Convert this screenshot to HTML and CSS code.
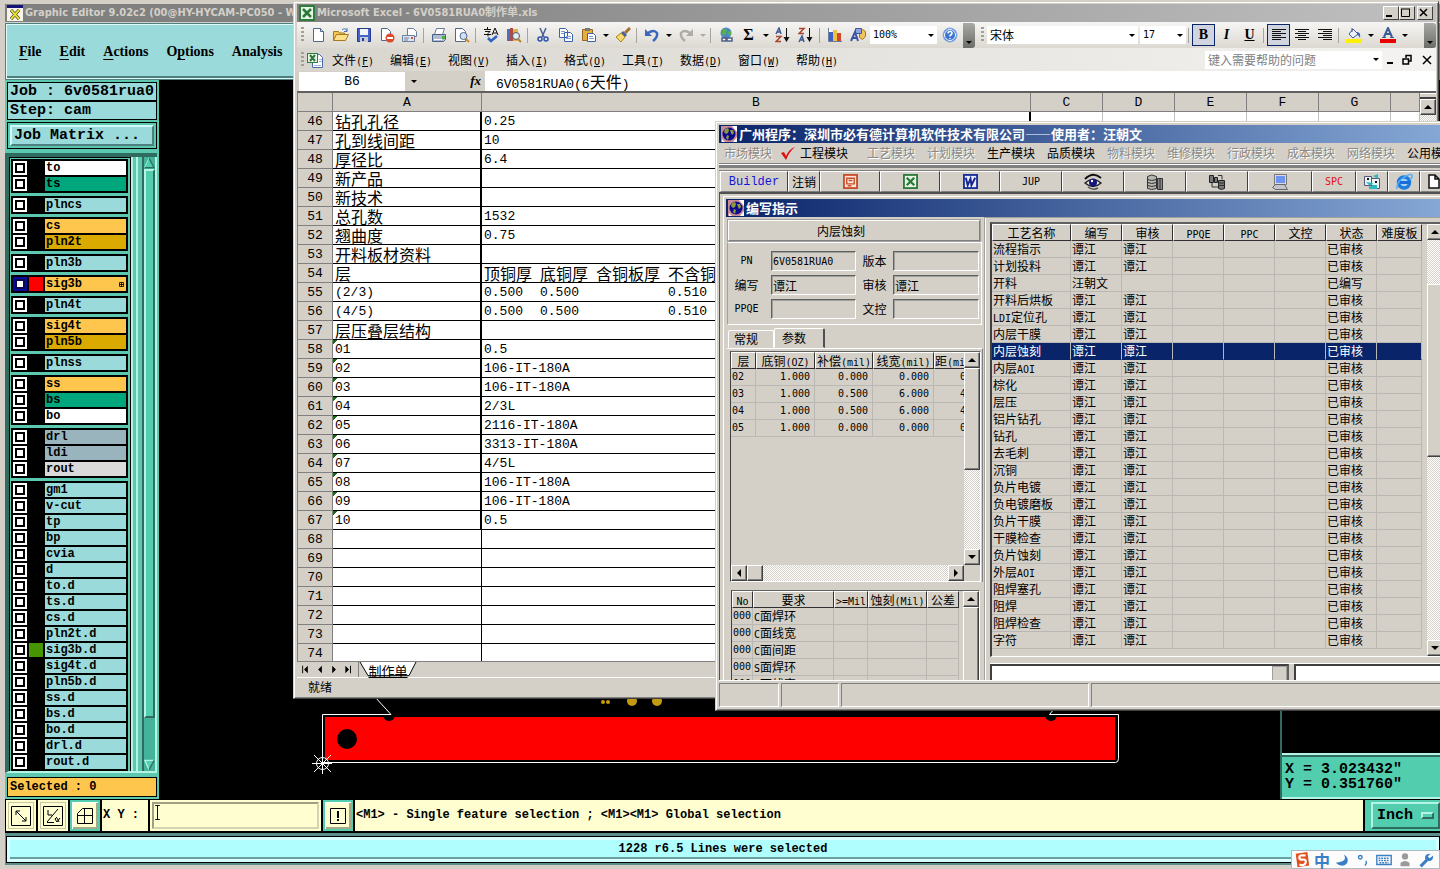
FILE: index.html
```html
<!DOCTYPE html>
<html lang="zh-CN">
<head>
<meta charset="utf-8">
<title>Graphic Editor</title>
<link rel="stylesheet" href="styles.css">
</head>
<body>
<svg class="defs" aria-hidden="true">
  <defs>
    <symbol id="globe" viewBox="0 0 16 16"><path fill="#c98a94" d="M0 0h16v16H0z"/><path fill="#fff" d="M11 0h5v6zM12 16h4v-5zM1 13l3 3H1z"/><circle cx="8" cy="8" r="6.500" fill="#0a0a8c"/><path fill="#8c9a3c" d="M4 3l3-1 1 2-1 3-2 1-2-2zM9 4l3 0 1 3-2 2-1-2zM6 9l2 1-1 4-2-2z"/></symbol>
    <symbol id="xl" viewBox="0 0 16 16"><path fill="#2f7d3c" d="M0 0h16v16H0z"/><path fill="#e8f4e8" d="M2 2h12v12H2z"/><path stroke="#2b7a38" stroke-width="2.500" d="M4 4l8 8M12 4l-8 8"/></symbol>
    <symbol id="xldoc" viewBox="0 0 16 16"><path fill="#fff" stroke="#4c6ca8" d="M5.500 2.500h7l3 3v10h-10z"/><path stroke="#9cb4dc" d="M12 7.500h3M12 9.500h3M7 13.500h7"/><path fill="#2f7d3c" d="M0 1h11v10H0z"/><path fill="#e8f4e8" d="M1 2h9v8H1z"/><path stroke="#2b7a38" stroke-width="2" d="M3 3l5 6M8 3L3 9"/></symbol>
    <symbol id="word" viewBox="0 0 16 16"><path fill="#1d2f9a" d="M0 0h16v16H0z"/><path fill="#e8ecff" d="M2 2h12v12H2z"/><path fill="none" stroke="#14228a" stroke-width="2" d="M3 4l2 8 3-7 1 7 4-8"/></symbol>
    <symbol id="ppt" viewBox="0 0 16 16"><path fill="#c8502c" d="M0 0h16v16H0z"/><path fill="#fbe6dc" d="M2 2h12v12H2z"/><path fill="none" stroke="#c8502c" stroke-width="1.500" d="M4 4.500h8v6H4zM6 7h4M5 12.500h4"/></symbol>
    <symbol id="new" viewBox="0 0 16 16"><path fill="#fff" stroke="#52678c" d="M3.500 1.500h7l3 3v10h-10z"/><path fill="#c6d4ea" stroke="#52678c" d="M10.500 1.500v3h3"/></symbol>
    <symbol id="open" viewBox="0 0 16 16"><path fill="#f3c653" stroke="#a87a20" d="M.5 13.500v-9h5l1 1.500h5v2"/><path fill="#ffe08a" stroke="#a87a20" d="M.5 13.500l3-6h12l-3 6z"/><path fill="none" stroke="#4a72b8" d="M9 3q3-3 5 1m0-3v3.500h-3"/></symbol>
    <symbol id="save" viewBox="0 0 16 16"><path fill="#4464c8" stroke="#26388c" d="M1.500 1.500h13v13h-13z"/><path fill="#f2f4fa" d="M4 2h8v6H4z"/><path fill="#c9ccd6" d="M4 10h8v5H4z"/><path fill="#26388c" d="M6 11h2v3H6z"/></symbol>
    <symbol id="perm" viewBox="0 0 16 16"><path fill="#fff" stroke="#52678c" d="M2.500 1.500h6l3 3v9h-9z"/><circle cx="11" cy="11" r="4.500" fill="#dc4a2c"/><path fill="#fff" d="M8 10h6v2H8z"/></symbol>
    <symbol id="mail" viewBox="0 0 16 16"><path fill="#fff" stroke="#6c7c9c" d="M5.500 1.500h6l3 3v5h-9z"/><path fill="#dfe6f2" stroke="#6c7c9c" d="M.5 8.500h12v6H.5z"/><path stroke="#6c7c9c" d="M2 11h5m-5 2h4"/><path fill="#d4552c" d="M9 10h2v2H9z"/></symbol>
    <symbol id="print" viewBox="0 0 16 16"><path fill="#fff" stroke="#6c7c9c" d="M5.500 1.500h8l-2 6h-8z"/><path fill="#aebbd2" stroke="#4c5f86" d="M1.500 7.500h13v5l-2 2h-11z"/><path fill="#fff" d="M3 12h8v1H3z"/><path fill="#4cae3c" d="M11 9h3v3h-3z"/></symbol>
    <symbol id="preview" viewBox="0 0 16 16"><path fill="#fff" stroke="#52678c" d="M1.500 1.500h7l3 3v10h-10z"/><circle cx="9.500" cy="9" r="3.500" fill="#cfe2f4" stroke="#52678c"/><path stroke="#d08a20" stroke-width="2" d="M12 12l3 3"/></symbol>
    <symbol id="spell" viewBox="0 0 16 16"><path fill="none" stroke="#111" d="M1 2.500h7M4.500 0v2M2 4.500h5l-2 2v3M1 7.500h7M9 8l3-7 3 7M10 6h4"/><path fill="none" stroke="#2e62c4" stroke-width="2.500" d="M5 11l3 3 6-5"/></symbol>
    <symbol id="research" viewBox="0 0 16 16"><path fill="#4a72b8" d="M1 2h3v12H1z"/><path fill="#b04a4a" d="M4 1h3v13H4z"/><path fill="#dcb44c" d="M7 2h5v12H7z"/><circle cx="10" cy="9" r="3.500" fill="#e3edf7" stroke="#555"/><path stroke="#b88324" stroke-width="2" d="M12 12l3 3"/></symbol>
    <symbol id="cut" viewBox="0 0 16 16"><path fill="none" stroke="#48608c" stroke-width="1.500" d="M5 1l4 9M11 1l-4 9"/><g fill="none" stroke="#2c54b0" stroke-width="1.500"><circle cx="5" cy="12" r="2"/><circle cx="11" cy="12" r="2"/></g></symbol>
    <symbol id="copy" viewBox="0 0 16 16"><path fill="#fff" stroke="#3c62ac" d="M1.500 1.500h6l2 2v7h-8zM6.500 5.500h6l2 2v7h-8z"/><path stroke="#7c9cd4" d="M3 4.500h4M3 6.500h3M8 9.500h5M8 11.500h5"/></symbol>
    <symbol id="paste" viewBox="0 0 16 16"><path fill="#e6ac3c" stroke="#94682c" d="M1.500 2.500h10v11h-10z"/><path fill="#777" d="M4 1h5v3H4z"/><path fill="#fff" stroke="#3c62ac" d="M6.500 6.500h6l2 2v6h-8z"/><path stroke="#7c9cd4" d="M8 9.500h4M8 11.500h5"/></symbol>
    <symbol id="brush" viewBox="0 0 16 16"><path stroke="#a4702c" stroke-width="3" d="M15 1l-5 5"/><path fill="#4a62a4" d="M8 4l4 4-2 2-4-4z"/><path fill="#f4d870" stroke="#a88420" d="M6 6l4 4-4 5-5-5z"/></symbol>
    <symbol id="undo" viewBox="0 0 16 16"><path fill="none" stroke="currentColor" stroke-width="2.500" d="M4 6q6-4 9 0 1 4-4 8"/><path fill="currentColor" d="M1 2v7h7z"/></symbol>
    <symbol id="link" viewBox="0 0 16 16"><circle cx="8" cy="6" r="5.500" fill="#4a86c8"/><path fill="#56b050" d="M4 3l4-2 1 4-3 4-2-2zM10 5l3-1v4l-2 1z"/><path fill="#fff" stroke="#4c5f86" stroke-width="1.500" d="M4 11h4v3H4zM9 11h5v3H9z"/></symbol>
    <symbol id="chart" viewBox="0 0 16 16"><path fill="#fff" stroke="#6c7c9c" d="M1.500 1v13.500H15"/><path fill="#3c62c4" d="M2 5h4v9H2z"/><path fill="#f0c040" d="M6 3h4v11H6z"/><path fill="#d0482c" d="M10 6h4v8h-4z"/></symbol>
    <symbol id="draw" viewBox="0 0 16 16"><path fill="#f0c458" stroke="#a0782c" d="M9.500 5.500l3-3 3 2v5l-3 3-3-2z"/><path fill="#8ea4e0" stroke="#4458a4" d="M5.500 1.500h6v5h-6z"/><path fill="none" stroke="#3c54a8" stroke-width="2" d="M1 14l4-9 3 9M3 11h4"/></symbol>
    <symbol id="help" viewBox="0 0 16 16"><circle cx="8" cy="8" r="7" fill="#3a74d0" stroke="#8cb0e8"/><circle cx="8" cy="8" r="5.500" fill="none" stroke="#fff"/><path fill="none" stroke="#fff" stroke-width="1.500" d="M6 6.500q0-2 2-2t2 2q0 1-2 2v1M8 11v1"/></symbol>
    <symbol id="bucket" viewBox="0 0 16 16"><path fill="#eef2fa" stroke="#3c5a94" d="M7 2l5 5-5 4-4-4zM6 5V1"/><path fill="#3c62ac" d="M11 5q4 0 3 6-1-3-3-3z"/><path fill="#fdf000" d="M0 12h16v4H0z"/></symbol>
    <symbol id="fontcolor" viewBox="0 0 16 16"><path fill="none" stroke="#3c5a94" stroke-width="2" d="M4 10l4-9 4 9M5 7h6"/><path stroke="#3c5a94" d="M2 10.500h4M10 10.500h4"/><path fill="#e80000" d="M0 12h16v4H0z"/></symbol>
    <symbol id="sort-az" viewBox="0 0 16 16"><path fill="none" stroke="#3c5a94" stroke-width="1.500" d="M1 7l3-6 2 6M2 5h4"/><path fill="none" stroke="#a8442c" stroke-width="1.500" d="M1 9.500h5l-5 5h5"/><path fill="#111" d="M11 1h1v11h-1zM8.500 10h6L11.500 15z"/></symbol>
    <symbol id="sort-za" viewBox="0 0 16 16"><path fill="none" stroke="#a8442c" stroke-width="1.500" d="M1 1.500h5l-5 5h5"/><path fill="none" stroke="#3c5a94" stroke-width="1.500" d="M1 15l3-6 2 6M2 13h4"/><path fill="#111" d="M11 1h1v11h-1zM8.500 10h6L11.500 15z"/></symbol>
    <symbol id="al-left" viewBox="0 0 16 16"><path stroke="#111" d="M1 2.500h14M1 4.500h9M1 6.500h14M1 8.500h9M1 10.500h14M1 12.500h9"/></symbol>
    <symbol id="al-center" viewBox="0 0 16 16"><path stroke="#111" d="M1 2.500h14M4 4.500h8M1 6.500h14M4 8.500h8M1 10.500h14M4 12.500h8"/></symbol>
    <symbol id="al-right" viewBox="0 0 16 16"><path stroke="#111" d="M1 2.500h14M6 4.500h9M1 6.500h14M6 8.500h9M1 10.500h14M6 12.500h9"/></symbol>
    <symbol id="eye" viewBox="0 0 18 18"><path fill="none" stroke="#111" stroke-width="2" d="M1 6q8-8 16-1"/><path fill="#eee" stroke="#222" stroke-width="1.500" d="M1 10q8-7 16 0-8 7-16 0z"/><circle cx="9" cy="9.500" r="4" fill="#14147c"/><circle cx="8" cy="8" r="1.200" fill="#fff"/><path fill="none" stroke="#555" stroke-width="1.500" d="M4 14q5 4 10 1"/></symbol>
    <symbol id="db" viewBox="0 0 18 18"><path fill="#b8b6b0" stroke="#333" d="M1.500 3.500q4-3 9 0v12q-5 2-9 0z"/><path fill="none" stroke="#333" d="M1.500 6.500q4 2 9 0M1.500 9.500q4 2 9 0M1.500 12.500q4 2 9 0"/><path fill="#888" stroke="#333" d="M11.500 5.500h5v11h-5zM14 6v10"/></symbol>
    <symbol id="net" viewBox="0 0 18 18"><path fill="#777" stroke="#222" d="M1.500 2.500h4v7h-4zM6.500 4.500h3v5h-3zM10.500 7.500h6v8l-3 1-3-1z"/><path fill="none" stroke="#333" d="M10 2.500h4v4M4 10v4h6M11 10h5M11 12.500h5"/></symbol>
    <symbol id="pc" viewBox="0 0 18 18"><path fill="#d8d8e4" stroke="#777" d="M3.500 1.500h12v10h-12z"/><path fill="#6c94f0" d="M5 3h9v7H5z"/><path fill="#c4c4cc" stroke="#666" d="M1.500 14.500l3-3h9l3 5h-12z"/></symbol>
    <symbol id="sync" viewBox="0 0 18 18"><path fill="#e8f4f4" stroke="#557" d="M1.500 3.500h7v9h-7zM8.500 5.500h8v10h-8z"/><path fill="#2cb8c0" d="M3 9l5 5 2-4zM10 3l5-2v5zM6 12h8v4H6z"/><path fill="#111" d="M4 5h2v2H4zM12 8h2v2h-2z"/></symbol>
    <symbol id="ie" viewBox="0 0 18 18"><circle cx="9" cy="9.500" r="5.500" fill="#a8d0f8" stroke="#1c7ce0" stroke-width="3.500"/><path fill="#1c6cd8" d="M5 8h10v3H5z"/><path fill="none" stroke="#58aef4" stroke-width="1.500" d="M2 16Q1 10 8 5t9-3q1 2-2 5"/></symbol>
    <symbol id="sheet" viewBox="0 0 18 18"><path fill="#fff" stroke="#111" stroke-width="1.500" d="M4 2h6l4 4v9H4zM10 2v4h4"/></symbol>
  </defs>
</svg>

<main class="editor">
  <header class="titlebar titlebar-off">
    <svg class="i16" viewBox="0 0 16 16"><path fill="#f6f4e8" d="M0 0h16v16H0z"/><path fill="#141478" d="M0 0h16v3H0z"/><path stroke="#111" stroke-width="3" d="M4 5l8 9M12 5l-8 9"/><path stroke="#e8e030" stroke-width="2" d="M4 5l8 9M12 5l-8 9"/></svg>
    <h1>Graphic Editor 9.02c2 (00@HY-HYCAM-PC050 - W</h1>
  </header>
  <nav class="ed-menu">
    <button><u>F</u>ile</button><button><u>E</u>dit</button><button><u>A</u>ctions</button><button>O<u>p</u>tions</button><button>Analysis</button>
  </nav>

  <div class="ed-main">
    <aside class="side">
      <p class="job">Job : 6v0581rua0</p>
      <p class="job step">Step: cam</p>
      <div class="matrix"><button>Job Matrix ...</button></div>
      <div class="list">
        <div class="layers">
          <div class="grp">
            <label class="ly white"><input type="checkbox"><i></i><span>to</span></label>
            <label class="ly green"><input type="checkbox"><i></i><span>ts</span></label>
          </div>
          <div class="grp"><label class="ly"><input type="checkbox"><i></i><span>plncs</span></label></div>
          <div class="grp">
            <label class="ly amber"><input type="checkbox"><i></i><span>cs</span></label>
            <label class="ly gold"><input type="checkbox"><i></i><span>pln2t</span></label>
          </div>
          <div class="grp"><label class="ly"><input type="checkbox"><i></i><span>pln3b</span></label></div>
          <div class="grp"><label class="ly amber"><input type="checkbox" checked><i class="red"></i><span>sig3b<svg viewBox="0 0 5 5"><path d="M.5.5h4v4h-4zM2.500 0v5M0 2.500h5" fill="none" stroke="#000" stroke-width=".8"/></svg></span></label></div>
          <div class="grp"><label class="ly"><input type="checkbox"><i></i><span>pln4t</span></label></div>
          <div class="grp">
            <label class="ly amber"><input type="checkbox"><i></i><span>sig4t</span></label>
            <label class="ly gold"><input type="checkbox"><i></i><span>pln5b</span></label>
          </div>
          <div class="grp"><label class="ly"><input type="checkbox"><i></i><span>plnss</span></label></div>
          <div class="grp">
            <label class="ly amber"><input type="checkbox"><i></i><span>ss</span></label>
            <label class="ly green"><input type="checkbox"><i></i><span>bs</span></label>
            <label class="ly white"><input type="checkbox"><i></i><span>bo</span></label>
          </div>
          <div class="grp">
            <label class="ly slate"><input type="checkbox"><i></i><span>drl</span></label>
            <label class="ly slate"><input type="checkbox"><i></i><span>ldi</span></label>
            <label class="ly silver"><input type="checkbox"><i></i><span>rout</span></label>
          </div>
          <div class="grp">
            <label class="ly"><input type="checkbox"><i></i><span>gm1</span></label>
            <label class="ly"><input type="checkbox"><i></i><span>v-cut</span></label>
            <label class="ly"><input type="checkbox"><i></i><span>tp</span></label>
            <label class="ly"><input type="checkbox"><i></i><span>bp</span></label>
            <label class="ly"><input type="checkbox"><i></i><span>cvia</span></label>
            <label class="ly"><input type="checkbox"><i></i><span>d</span></label>
            <label class="ly"><input type="checkbox"><i></i><span>to.d</span></label>
            <label class="ly"><input type="checkbox"><i></i><span>ts.d</span></label>
            <label class="ly"><input type="checkbox"><i></i><span>cs.d</span></label>
            <label class="ly"><input type="checkbox"><i></i><span>pln2t.d</span></label>
            <label class="ly"><input type="checkbox"><i class="lime"></i><span>sig3b.d</span></label>
            <label class="ly"><input type="checkbox"><i></i><span>sig4t.d</span></label>
            <label class="ly"><input type="checkbox"><i></i><span>pln5b.d</span></label>
            <label class="ly"><input type="checkbox"><i></i><span>ss.d</span></label>
            <label class="ly"><input type="checkbox"><i></i><span>bs.d</span></label>
            <label class="ly"><input type="checkbox"><i></i><span>bo.d</span></label>
            <label class="ly"><input type="checkbox"><i></i><span>drl.d</span></label>
            <label class="ly"><input type="checkbox"><i></i><span>rout.d</span></label>
          </div>
        </div>
        <div class="rail"></div>
        <div class="motif-scroll">
          <svg viewBox="0 0 13 13"><path fill="#52cdae" stroke="#b4f4e4" stroke-width="1.500" d="M1 12L6 1"/><path fill="#52cdae" stroke="#2f6b5f" stroke-width="1.500" d="M6 1l6 11H1"/></svg>
          <div class="thumb"></div>
          <svg viewBox="0 0 13 13"><path fill="#52cdae" stroke="#b4f4e4" stroke-width="1.500" d="M12 1H1l5 11"/><path stroke="#2f6b5f" stroke-width="1.500" d="M12 1L6 12"/></svg>
        </div>
      </div>
      <p class="selected">Selected : 0</p>
    </aside>

    <svg class="board" role="img" aria-label="board">
      <g transform="translate(-159 -80)">
        <path fill="#f00" d="M325 717h790v43H325z"/>
        <circle cx="347" cy="739" r="10"/><circle cx="389" cy="715" r="6"/><circle cx="1051" cy="715" r="6"/>
        <path fill="none" stroke="#fff" d="M375 697l16 17.500h-68.500v48h793q3 0 3-4v-44h-69l4-5"/>
        <path stroke="#fff" d="M312 763.500h20M322.500 753v21M314 755l17 17M331 755l-17 17"/><circle cx="322.500" cy="763.500" r="6" fill="none" stroke="#fff"/>
        <g fill="#c49a10"><circle cx="632" cy="701" r="5"/><circle cx="657" cy="701" r="5"/><circle cx="603" cy="702" r="2"/><circle cx="608" cy="702" r="2"/></g>
      </g>
    </svg>
    <section class="coords"><p>X = 3.023432"<br>Y = 0.351760"</p></section>
  </div>

  <div class="ed-bar">
    <button class="tb" aria-label="resize"><svg viewBox="0 0 22 22"><path d="M1.500 1.500h19v19h-19zM6 6l10 10M6 10V6h4M12 16h4v-4"/></svg></button>
    <button class="tb" aria-label="angle"><svg viewBox="0 0 22 22"><path d="M1.500 1.500h19v19h-19zM5 17L16 4M6 5v5h4M5 17.500h7M15 12l-2 2 2 3 3-4M17 17l-2-4"/></svg></button>
    <button class="tb on" aria-label="grid"><svg viewBox="0 0 22 22"><path d="M3.500 8.500l5-5h10v15h-15zM3 10.500h16M10.500 3v16"/></svg></button>
    <label class="xy" for="xy">X Y :</label>
    <div class="xy-box"><input id="xy" type="text"><svg class="ibeam" viewBox="0 0 5 16"><path fill="none" stroke="#000" d="M0 .5h5M0 15.500h5M2.500 0v16"/></svg></div>
    <button class="tb on" aria-label="alert"><svg viewBox="0 0 22 22"><path d="M3.500 3.500h15v15h-15z"/><path stroke-width="2" d="M11 6v7M11 14v2"/></svg></button>
    <p class="hint">&lt;M1&gt; - Single feature selection ; &lt;M1&gt;&lt;M1&gt; Global selection</p>
    <div class="unit"><button>Inch<i></i></button></div>
  </div>
  <footer class="ed-status"><p>1228 r6.5 Lines were selected</p></footer>
</main>

<section class="win excel">
  <header class="titlebar titlebar-off">
    <svg class="i16"><use href="#xl"/></svg><h2>Microsoft Excel - 6V0581RUA0制作单.xls</h2>
    <div class="wbtns">
      <button aria-label="min"><svg viewBox="0 0 12 10"><path fill="#000" d="M2 7h6v2H2z"/></svg></button><button aria-label="max"><svg viewBox="0 0 12 10"><path fill="none" stroke="#000" d="M1.500 1v7.500h8V1M1 1h9" /></svg></button><button class="x" aria-label="close"><svg viewBox="0 0 12 10"><path stroke="#000" stroke-width="1.500" d="M2 1l7 7M9 1L2 8"/></svg></button>
    </div>
  </header>
  <div class="tools">
    <b class="grip"></b>
    <button><svg><use href="#new"/></svg></button><button><svg><use href="#open"/></svg></button><button><svg><use href="#save"/></svg></button><button><svg><use href="#perm"/></svg></button><button><svg><use href="#mail"/></svg></button><hr>
    <button><svg><use href="#print"/></svg></button><button><svg><use href="#preview"/></svg></button><hr>
    <button><svg><use href="#spell"/></svg></button><button><svg><use href="#research"/></svg></button><hr>
    <button><svg><use href="#cut"/></svg></button><button><svg><use href="#copy"/></svg></button><button><svg><use href="#paste"/></svg></button><i class="car"></i><button><svg><use href="#brush"/></svg></button><hr>
    <button class="blue"><svg><use href="#undo"/></svg></button><i class="car"></i><button class="gray flip"><svg><use href="#undo"/></svg></button><i class="car gray"></i><hr>
    <button><svg><use href="#link"/></svg></button><button class="sigma">Σ</button><i class="car"></i><button><svg><use href="#sort-az"/></svg></button><button><svg><use href="#sort-za"/></svg></button><hr>
    <button><svg><use href="#chart"/></svg></button><button><svg><use href="#draw"/></svg></button>
    <span class="combo zoom"><select aria-label="zoom"><option>100%</option></select></span>
    <button><svg><use href="#help"/></svg></button><i class="more"></i>
    <b class="grip second"></b>
    <span class="combo font"><select aria-label="font"><option>宋体</option></select></span>
    <span class="combo size"><select aria-label="size"><option>17</option></select></span><hr>
    <button class="on serif"><b>B</b></button><button class="serif"><em>I</em></button><button class="serif"><u>U</u></button><hr>
    <button class="on"><svg><use href="#al-left"/></svg></button><button><svg><use href="#al-center"/></svg></button><button><svg><use href="#al-right"/></svg></button><hr>
    <button><svg><use href="#bucket"/></svg></button><i class="car"></i><button><svg><use href="#fontcolor"/></svg></button><i class="car"></i>
    <i class="more last"></i>
  </div>
  <nav class="x-menu">
    <b class="grip"></b><svg class="i16"><use href="#xldoc"/></svg>
    <button>文件<span class="en">(<u>F</u>)</span></button><button>编辑<span class="en">(<u>E</u>)</span></button><button>视图<span class="en">(<u>V</u>)</span></button><button>插入<span class="en">(<u>I</u>)</span></button><button>格式<span class="en">(<u>O</u>)</span></button><button>工具<span class="en">(<u>T</u>)</span></button><button>数据<span class="en">(<u>D</u>)</span></button><button>窗口<span class="en">(<u>W</u>)</span></button><button>帮助<span class="en">(<u>H</u>)</span></button>
    <span class="combo ask"><select aria-label="help"><option>键入需要帮助的问题</option></select></span>
    <svg class="mdi-btns" viewBox="0 0 50 12"><path fill="#000" d="M1 8h6v2H1z"/><path fill="none" stroke="#000" stroke-width="1.500" d="M20 4V1.500h5V7h-2M17 5h5.500v5H17zM37 2l8 8M45 2l-8 8"/></svg>
  </nav>
  <div class="fbar">
    <input class="name" aria-label="cell" value="B6"><i class="car"></i><em>fx</em>
    <p><span class="num">6V0581RUA0(6</span>天件<span class="num">)</span></p>
  </div>
  <div class="sheet">
    <div class="sheet-clip">
    <table>
      <colgroup><col class="c0"><col class="ca"><col class="cb"><col class="cn"><col class="cn"><col class="cn"><col class="cn"><col class="cn"><col></colgroup>
      <thead><tr><th></th><th>A</th><th>B</th><th>C</th><th>D</th><th>E</th><th>F</th><th>G</th><th></th></tr></thead>
      <tbody>
        <tr><th>46</th><td>钻孔孔径</td><td class="num">0.25</td><td></td><td></td><td></td><td></td><td></td><td></td></tr>
        <tr><th>47</th><td>孔到线间距</td><td class="num">10</td><td colspan="6"></td></tr>
        <tr><th>48</th><td>厚径比</td><td class="num">6.4</td><td colspan="6"></td></tr>
        <tr><th>49</th><td>新产品</td><td></td><td colspan="6"></td></tr>
        <tr><th>50</th><td>新技术</td><td></td><td colspan="6"></td></tr>
        <tr><th>51</th><td>总孔数</td><td class="num">1532</td><td colspan="6"></td></tr>
        <tr><th>52</th><td>翘曲度</td><td class="num">0.75</td><td colspan="6"></td></tr>
        <tr><th>53</th><td>开料板材资料</td><td></td><td colspan="6"></td></tr>
        <tr><th>54</th><td>层</td><td><div class="cu"><span>顶铜厚</span><span>底铜厚</span><span>含铜板厚</span><span>不含铜板厚</span></div></td><td colspan="6"></td></tr>
        <tr><th>55</th><td class="num">(2/3)</td><td class="num"><div class="cu"><span>0.500</span><span>0.500</span><span></span><span>0.510</span></div></td><td colspan="6"></td></tr>
        <tr><th>56</th><td class="num">(4/5)</td><td class="num"><div class="cu"><span>0.500</span><span>0.500</span><span></span><span>0.510</span></div></td><td colspan="6"></td></tr>
        <tr><th>57</th><td>层压叠层结构</td><td></td><td colspan="6"></td></tr>
        <tr class="flag"><th>58</th><td class="num">01</td><td class="num">0.5</td><td colspan="6"></td></tr>
        <tr class="flag"><th>59</th><td class="num">02</td><td class="num">106-IT-180A</td><td colspan="6"></td></tr>
        <tr class="flag"><th>60</th><td class="num">03</td><td class="num">106-IT-180A</td><td colspan="6"></td></tr>
        <tr class="flag"><th>61</th><td class="num">04</td><td class="num">2/3L</td><td colspan="6"></td></tr>
        <tr class="flag"><th>62</th><td class="num">05</td><td class="num">2116-IT-180A</td><td colspan="6"></td></tr>
        <tr class="flag"><th>63</th><td class="num">06</td><td class="num">3313-IT-180A</td><td colspan="6"></td></tr>
        <tr class="flag"><th>64</th><td class="num">07</td><td class="num">4/5L</td><td colspan="6"></td></tr>
        <tr class="flag"><th>65</th><td class="num">08</td><td class="num">106-IT-180A</td><td colspan="6"></td></tr>
        <tr class="flag"><th>66</th><td class="num">09</td><td class="num">106-IT-180A</td><td colspan="6"></td></tr>
        <tr class="flag"><th>67</th><td class="num">10</td><td class="num">0.5</td><td colspan="6"></td></tr>
        <tr class="thin"><th>68</th><td></td><td></td><td colspan="6"></td></tr>
        <tr class="thin"><th>69</th><td></td><td></td><td colspan="6"></td></tr>
        <tr class="thin"><th>70</th><td></td><td></td><td colspan="6"></td></tr>
        <tr class="thin"><th>71</th><td></td><td></td><td colspan="6"></td></tr>
        <tr class="thin"><th>72</th><td></td><td></td><td colspan="6"></td></tr>
        <tr class="thin"><th>73</th><td></td><td></td><td colspan="6"></td></tr>
        <tr class="thin"><th>74</th><td></td><td></td><td colspan="6"></td></tr>
      </tbody>
    </table>
    </div>
    <div class="sb v"><i class="split"></i><button class="up" aria-label="up"></button><i class="track"></i></div>
  </div>
  <div class="tabs-row">
    <svg class="navs" viewBox="0 0 62 16"><path d="M4 4h1v8H4zM10 4v8L6 8zM25 4v8l-4-4zM36 4v8l4-4zM50 4v8l4-4zM55 4h1v8h-1z"/></svg>
    <button class="stab"><svg viewBox="0 0 58 17" preserveAspectRatio="none"><path fill="#fff" d="M1 0l8 14h41l7-14z"/><path fill="none" stroke="#000" d="M1 0l8 14.500h41l7-14.500"/></svg><span>制作单</span></button>
  </div>
  <footer class="x-status">就绪</footer>
</section>

<section class="win erp">
  <header class="titlebar titlebar-on"><svg class="i16"><use href="#globe"/></svg><h2>广州程序：深圳市必有德计算机软件技术有限公司——使用者：汪朝文</h2></header>
  <nav class="e-menu">
    <button disabled>市场模块</button><button class="ck"><svg viewBox="0 0 16 14"><path fill="#e01010" d="M1 7l3-1 2 4Q9 3 15 1 9 6 6 14z"/></svg>工程模块</button><button disabled>工艺模块</button><button disabled>计划模块</button><button>生产模块</button><button>品质模块</button><button disabled>物料模块</button><button disabled>维修模块</button><button disabled>行政模块</button><button disabled>成本模块</button><button disabled>网络模块</button><button>公用模块</button>
  </nav>
  <div class="groove"></div>
  <div class="e-tools">
    <button class="builder">Builder</button><button class="w32">注销</button><button class="w60"><svg><use href="#ppt"/></svg></button><button class="w60"><svg><use href="#xl"/></svg></button><button class="w60"><svg><use href="#word"/></svg></button><button class="w62"><span class="en">JUP</span></button><button class="w62"><svg class="i18"><use href="#eye"/></svg></button><button class="w62"><svg class="i18"><use href="#db"/></svg></button><button class="w62"><svg class="i18"><use href="#net"/></svg></button><button class="w64"><svg class="i18"><use href="#pc"/></svg></button><button class="w44 spc"><span class="en">SPC</span></button><button class="w32"><svg class="i18"><use href="#sync"/></svg></button><button class="w32"><svg class="i18"><use href="#ie"/></svg></button><button class="rest"><svg class="i18"><use href="#sheet"/></svg></button>
  </div>
  <div class="mdi">
    <div class="child">
      <header class="titlebar titlebar-on"><svg class="i16"><use href="#globe"/></svg><h3>编写指示</h3></header>
      <div class="cols">
        <div class="left">
          <p class="cap">内层蚀刻</p>
          <form class="form">
            <label for="pn" class="en">PN</label><input id="pn" class="en" value="6V0581RUA0"><label for="ver">版本</label><input id="ver">
            <label for="wr">编写</label><input id="wr" value="谭江"><label for="ap">审核</label><input id="ap" value="谭江">
            <label for="qe" class="en">PPQE</label><input id="qe"><label for="dc">文控</label><input id="dc">
          </form>
          <div class="tabs"><button>常规</button><button class="cur">参数</button></div>
          <div class="page">
            <div class="grid g1">
              <div class="clip">
                <table class="t1">
                  <colgroup><col class="k25"><col class="k59"><col class="k58"><col class="k61"><col class="k59"></colgroup>
                  <thead><tr><th>层</th><th>底铜<span class="en">(OZ)</span></th><th>补偿<span class="en">(mil)</span></th><th>线宽<span class="en">(mil)</span></th><th>距<span class="en">(mil)</span></th></tr></thead>
                  <tbody>
                    <tr><td>02</td><td>1.000</td><td>0.000</td><td>0.000</td><td>0.000</td></tr>
                    <tr><td>03</td><td>1.000</td><td>0.500</td><td>6.000</td><td>4.000</td></tr>
                    <tr><td>04</td><td>1.000</td><td>0.500</td><td>6.000</td><td>4.000</td></tr>
                    <tr><td>05</td><td>1.000</td><td>0.000</td><td>0.000</td><td>0.000</td></tr>
                  </tbody>
                </table>
              </div>
              <div class="sb v"><button class="up" aria-label="up"></button><i class="bar b102"></i><i class="track"></i><button class="down" aria-label="down"></button></div>
              <div class="sb h"><button class="lf" aria-label="left"></button><i class="bar"></i><i class="track"></i><button class="rt" aria-label="right"></button></div>
            </div>
          </div>
          <div class="grid g2">
            <div class="clip">
              <table class="t2">
                <colgroup><col class="k21"><col class="k81"><col class="k34"><col class="k59"><col class="k32"></colgroup>
                <thead><tr><th><span class="en">No</span></th><th>要求</th><th><span class="en">&gt;=Mil</span></th><th>蚀刻<span class="en">(Mil)</span></th><th>公差</th></tr></thead>
                <tbody>
                  <tr><td class="en">000</td><td><span class="en">C</span>面焊环</td><td></td><td></td><td></td></tr>
                  <tr><td class="en">000</td><td><span class="en">C</span>面线宽</td><td></td><td></td><td></td></tr>
                  <tr><td class="en">000</td><td><span class="en">C</span>面间距</td><td></td><td></td><td></td></tr>
                  <tr><td class="en">000</td><td><span class="en">S</span>面焊环</td><td></td><td></td><td></td></tr>
                  <tr><td class="en">000</td><td><span class="en">S</span>面线宽</td><td></td><td></td><td></td></tr>
                </tbody>
              </table>
            </div>
            <div class="sb v"><button class="up" aria-label="up"></button><i class="bar fill"></i></div>
          </div>
        </div>
        <div class="right">
          <div class="grid g3">
            <div class="clip">
              <table class="t3">
                <colgroup><col class="k79"><col class="k51"><col class="k51"><col class="k51"><col class="k51"><col class="k51"><col class="k51"><col class="k45"></colgroup>
                <thead><tr><th>工艺名称</th><th>编写</th><th>审核</th><th><span class="en">PPQE</span></th><th><span class="en">PPC</span></th><th>文控</th><th>状态</th><th>难度板</th></tr></thead>
                <tbody>
                  <tr><td>流程指示</td><td>谭江</td><td>谭江</td><td></td><td></td><td></td><td>已审核</td><td></td></tr>
                  <tr><td>计划投料</td><td>谭江</td><td>谭江</td><td></td><td></td><td></td><td>已审核</td><td></td></tr>
                  <tr><td>开料</td><td>汪朝文</td><td></td><td></td><td></td><td></td><td>已编写</td><td></td></tr>
                  <tr><td>开料后烘板</td><td>谭江</td><td>谭江</td><td></td><td></td><td></td><td>已审核</td><td></td></tr>
                  <tr><td><span class="en">LDI</span>定位孔</td><td>谭江</td><td>谭江</td><td></td><td></td><td></td><td>已审核</td><td></td></tr>
                  <tr><td>内层干膜</td><td>谭江</td><td>谭江</td><td></td><td></td><td></td><td>已审核</td><td></td></tr>
                  <tr class="sel"><td>内层蚀刻</td><td>谭江</td><td>谭江</td><td></td><td></td><td></td><td>已审核</td><td></td></tr>
                  <tr><td>内层<span class="en">AOI</span></td><td>谭江</td><td>谭江</td><td></td><td></td><td></td><td>已审核</td><td></td></tr>
                  <tr><td>棕化</td><td>谭江</td><td>谭江</td><td></td><td></td><td></td><td>已审核</td><td></td></tr>
                  <tr><td>层压</td><td>谭江</td><td>谭江</td><td></td><td></td><td></td><td>已审核</td><td></td></tr>
                  <tr><td>铝片钻孔</td><td>谭江</td><td>谭江</td><td></td><td></td><td></td><td>已审核</td><td></td></tr>
                  <tr><td>钻孔</td><td>谭江</td><td>谭江</td><td></td><td></td><td></td><td>已审核</td><td></td></tr>
                  <tr><td>去毛刺</td><td>谭江</td><td>谭江</td><td></td><td></td><td></td><td>已审核</td><td></td></tr>
                  <tr><td>沉铜</td><td>谭江</td><td>谭江</td><td></td><td></td><td></td><td>已审核</td><td></td></tr>
                  <tr><td>负片电镀</td><td>谭江</td><td>谭江</td><td></td><td></td><td></td><td>已审核</td><td></td></tr>
                  <tr><td>负电镀磨板</td><td>谭江</td><td>谭江</td><td></td><td></td><td></td><td>已审核</td><td></td></tr>
                  <tr><td>负片干膜</td><td>谭江</td><td>谭江</td><td></td><td></td><td></td><td>已审核</td><td></td></tr>
                  <tr><td>干膜检查</td><td>谭江</td><td>谭江</td><td></td><td></td><td></td><td>已审核</td><td></td></tr>
                  <tr><td>负片蚀刻</td><td>谭江</td><td>谭江</td><td></td><td></td><td></td><td>已审核</td><td></td></tr>
                  <tr><td>外层<span class="en">AOI</span></td><td>谭江</td><td>谭江</td><td></td><td></td><td></td><td>已审核</td><td></td></tr>
                  <tr><td>阻焊塞孔</td><td>谭江</td><td>谭江</td><td></td><td></td><td></td><td>已审核</td><td></td></tr>
                  <tr><td>阻焊</td><td>谭江</td><td>谭江</td><td></td><td></td><td></td><td>已审核</td><td></td></tr>
                  <tr><td>阻焊检查</td><td>谭江</td><td>谭江</td><td></td><td></td><td></td><td>已审核</td><td></td></tr>
                  <tr><td>字符</td><td>谭江</td><td>谭江</td><td></td><td></td><td></td><td>已审核</td><td></td></tr>
                </tbody>
              </table>
            </div>
            <div class="sb v"><button class="up" aria-label="up"></button><i class="track t44"></i><i class="bar b173"></i><i class="track"></i><button class="down" aria-label="down"></button></div>
          </div>
          <div class="memos"><div class="memo m1"><i class="up-dis"></i></div><div class="memo"></div></div>
        </div>
      </div>
    </div>
  </div>
  <footer class="e-status"><span class="s1"></span><span class="s2"></span><span class="s3"></span><span class="s4"></span></footer>
</section>

<div class="ime">
  <svg viewBox="0 0 20 20"><path fill="#e2501c" d="M3 3l13-2 2 15-13 2z"/><path fill="none" stroke="#fff" stroke-width="2.500" d="M14 5q-7-1-7 2t4 2.500 3 3.500-7 2"/></svg>
  <span>中</span>
  <svg viewBox="0 0 20 20"><path fill="#3a7ec4" d="M12 4q5 8-9 9 8 7 13 0 2-5-4-9z"/></svg>
  <svg viewBox="0 0 20 20"><g fill="none" stroke="#3a7ec4" stroke-width="1.500"><circle cx="7" cy="7" r="2"/><path d="M13 11q2 2-1 5"/></g></svg>
  <svg viewBox="0 0 20 20"><path fill="none" stroke="#3a7ec4" stroke-width="1.500" d="M2 5h16v10H2z"/><path stroke="#3a7ec4" stroke-width="1.500" stroke-dasharray="2 1" d="M4 8h12M4 10.500h12M5 13h10"/></svg>
  <svg viewBox="0 0 20 20"><circle cx="10" cy="6" r="3.500" fill="#9a9a9a"/><path fill="#9a9a9a" d="M5 17v-4q5-4 10 0v4z"/></svg>
  <svg viewBox="0 0 20 20"><path fill="none" stroke="#3a7ec4" stroke-width="3.500" d="M4 17l7-7"/><path fill="#3a7ec4" d="M9 9q-1-6 6-6l-3 3 2 2 4-3q0 7-6 6z"/></svg>
</div>
</body>
</html>
```
FILE: styles.css
```css
* { box-sizing: border-box; }
:root {
  --face: #d4d0c8;
  --teal: #9adada;
  --mint: #52cdae;
  --mint-hi: #b4f4e4;
  --pine: #2f6b5f;
  --cream: #fefed0;
}
html, body { height: 100%; }
body {
  position: relative;
  margin: 0;
  overflow: hidden;
  background: #000;
  color: #000;
  font: 12px/16px "Noto Sans CJK SC", sans-serif;
}
p, h1, h2, h3 { margin: 0; }
button, input, select {
  margin: 0;
  padding: 0;
  border: 0;
  border-radius: 0;
  background: none;
  color: inherit;
  font: inherit;
}
i { font-style: normal; }
svg { flex: none; }
.defs { position: absolute; width: 0; height: 0; }
.i16 { width: 16px; height: 16px; }
.i18 { width: 18px; height: 18px; }
.en { font-family: "DejaVu Sans Mono", monospace; font-size: 10px; }
span.en { line-height: 0; }
.num { font-family: "Liberation Mono", monospace; font-size: 13px; }
span.num { line-height: 0; }

/* title bars */
.titlebar { display: flex; align-items: center; gap: 2px; padding-left: 2px; overflow: hidden; white-space: nowrap; }
.titlebar h1, .titlebar h2, .titlebar h3 { flex: 1; min-width: 0; font-weight: bold; line-height: 18px; }
.titlebar-off { height: 18px; flex: none; background: linear-gradient(90deg, #808080, #c0c0c0); color: var(--face); }
.titlebar-off h1, .titlebar-off h2 { font-family: "DejaVu Sans Condensed", "Noto Sans CJK SC", sans-serif; font-size: 11px; }
.titlebar-on { height: 18px; flex: none; background: linear-gradient(90deg, #0a246a, #86a8d6); color: #fff; }
.titlebar-on h2, .titlebar-on h3 { font-size: 13px; }

/* layer editor */
.editor {
  display: grid;
  grid-template-rows: 19px 57px 1fr 34px 32px;
  height: 100%;
  padding: 4px 0 4px 5px;
  background: var(--face);
  font-family: "Liberation Mono", monospace;
  font-weight: bold;
}
.editor > .titlebar { background: #808080; }
.ed-menu {
  display: flex;
  align-items: center;
  gap: 18px;
  padding-left: 12px;
  border: 2px solid #e0fafa;
  outline: 1px solid #4f8080;
  outline-offset: -1px;
  background: var(--teal);
  box-shadow: inset 0 -2px #4f8080;
  font: bold 14px/20px "Liberation Serif", serif;
}
.ed-menu u { text-underline-offset: 3px; }
.ed-main { display: flex; min-height: 0; overflow: hidden; background: #000; }
.side { display: flex; flex-direction: column; flex: none; width: 154px; padding: 2px 0; background: #5cc8b0; }
.job, .matrix, .selected { flex: none; margin: 0 2px; border: 1px solid #000; background: var(--teal); white-space: nowrap; }
.job { height: 19px; padding-left: 2px; font-size: 15px; line-height: 17px; }
.job.step { margin-bottom: 2px; }
.matrix { height: 27px; padding: 2px; background: #5cc8b0; }
.matrix button { width: 100%; height: 21px; padding-left: 2px; border: 2px solid; border-color: #d0fafa #4f8080 #4f8080 #d0fafa; background: var(--teal); font-size: 15px; line-height: 16px; text-align: left; }
.list { display: flex; flex: 1; min-height: 0; margin: 4px 2px 4px 0; border: solid var(--pine); border-width: 4px 0 0 4px; border-bottom: 2px solid var(--mint-hi); }
.layers { display: flex; flex-direction: column; gap: 3px; flex: none; width: 122px; padding: 1px 2px 0 1px; border: 1px solid #000; border-bottom: 0; }
.grp { display: flex; flex-direction: column; gap: 2px; padding: 2px; background: #000; }
.ly { display: flex; gap: 2px; height: 14px; }
.ly input { appearance: none; flex: none; width: 14px; height: 14px; border: 2px solid #fff; background: #fff; box-shadow: inset 0 0 0 2px #000; }
.ly input:checked { border-color: #0a0a9c; box-shadow: inset 0 0 0 2px #0a0a50; }
.ly i { flex: none; width: 14px; }
.ly .red { background: #f00; }
.ly .lime { background: #459600; }
.ly span { display: flex; flex: 1; align-items: center; justify-content: space-between; padding: 0 2px 0 1px; background: var(--teal); font-size: 12px; line-height: 14px; }
.ly svg { width: 5px; height: 5px; }
.white span { background: #fff; }
.green span { background: #00a67c; }
.amber span { background: #fec64d; }
.gold span { background: #daaa00; }
.slate span { background: #9ab4be; }
.silver span { background: #dadada; }
.rail { flex: none; width: 11px; border: solid var(--mint-hi); border-width: 0 0 0 2px; background: linear-gradient(90deg, #5cc8b0 3px, var(--mint-hi) 3px, var(--mint-hi) 5px, #5cc8b0 5px); }
.motif-scroll { display: flex; flex: 1; flex-direction: column; justify-content: space-between; border: solid var(--pine); border-width: 0 0 0 2px; border-right: 2px solid var(--mint-hi); background: #45b29c; }
.motif-scroll svg { width: 11px; height: 12px; }
.motif-scroll .thumb { flex: 1; margin-bottom: 41px; border: 2px solid; border-color: var(--mint-hi) var(--pine) var(--pine) var(--mint-hi); background: var(--mint); }
.selected { height: 20px; padding-left: 2px; background: #fec64d; line-height: 18px; }
.board { flex: 1; min-width: 0; height: 100%; }
.coords { display: flex; flex: none; flex-direction: column; justify-content: flex-end; width: 160px; border-left: 2px solid var(--pine); }
.coords p { padding: 7px 3px 5px; border: solid var(--mint-hi); border-width: 2px 0; background: var(--mint); font-size: 15px; line-height: 15px; box-shadow: inset 0 2px var(--pine); }

.ed-bar { display: flex; gap: 2px; padding: 1px 0 2px 1px; background: #000; }
.tb { display: flex; flex: none; align-items: center; justify-content: center; width: 30px; border: 2px solid var(--cream); background: var(--cream); box-shadow: inset 0 0 0 1px #c8c8a0; }
.tb.on { border: 2px solid var(--mint); box-shadow: inset 1px 1px #fff, inset -2px -2px #a8a888; }
.tb svg { width: 22px; height: 22px; fill: none; stroke: #000; }
.xy { width: 46px; background: var(--cream); line-height: 31px; padding-left: 1px; white-space: nowrap; }
.xy-box { display: flex; align-items: center; position: relative; flex: none; width: 171px; padding: 2px; background: var(--cream); }
.xy-box input { width: 100%; height: 27px; border: 2px solid; border-color: #a0a080 #d4d4b0 #d4d4b0 #a0a080; }
.ibeam { position: absolute; left: 5px; top: 5px; width: 5px; height: 15px; }
.hint { flex: 1; min-width: 0; padding-left: 1px; background: var(--cream); line-height: 31px; white-space: nowrap; overflow: hidden; }
.unit { flex: none; width: 75px; padding: 2px 0 2px 6px; background: var(--mint); }
.unit button { display: flex; align-items: center; justify-content: space-between; width: 100%; height: 27px; padding: 0 4px; border: 2px solid; border-color: var(--mint-hi) var(--pine) var(--pine) var(--mint-hi); font-size: 15px; }
.unit i { width: 13px; height: 7px; border: 2px solid; border-color: var(--mint-hi) var(--pine) var(--pine) var(--mint-hi); }
.ed-status { display: flex; padding: 3px 0 2px 1px; background: #5a8f8c; }
.ed-status p { flex: 1; border: 1px solid #000; background: #b0fefe; box-shadow: inset 0 0 0 3px #d8ffff, inset 0 -5px #6aa0a0; line-height: 24px; text-align: center; }

/* desktop windows */
.win { position: absolute; display: flex; flex-direction: column; border: 1px solid; border-color: var(--face) #404040 #404040 var(--face); background: var(--face); box-shadow: inset 1px 1px #fff, inset -1px -1px #808080; }

/* spreadsheet */
.excel { inset: 1px 1px 170px 293px; padding: 2px 2px 2px 3px; }
.wbtns { display: flex; padding-right: 3px; }
.wbtns button { width: 16px; height: 14px; border: 1px solid; border-color: #fff #404040 #404040 #fff; background: var(--face); }
.wbtns .x { margin-left: 2px; }
.wbtns svg { display: block; width: 12px; height: 10px; }
.tools { display: flex; align-items: center; flex: none; height: 26px; background: linear-gradient(#f6f5f3, #dcd9d2); overflow: hidden; }
.tools button { display: flex; flex: none; align-items: center; justify-content: center; width: 23px; height: 22px; }
.tools button svg { width: 16px; height: 16px; }
.tools .on { border: 1px solid #0a246a; background: #d0d4de; }
.tools .blue { color: #3a68c0; }
.tools .gray { color: #b0aca4; }
.flip svg { transform: scaleX(-1); }
.tools .sigma { font: bold 16px/20px "Liberation Serif", serif; }
.tools .serif { font: bold 14px/20px "Liberation Serif", serif; }
.tools hr { flex: none; width: 1px; height: 15px; margin: 0 3px 0 2px; border: 0; background: #a8a49c; }
.grip { flex: none; width: 3px; height: 16px; margin: 0 2px 0 4px; background: repeating-linear-gradient(#a4a098 0 2px, transparent 2px 4px); }
.grip.second { margin: 0 3px 0 6px; }
.car { display: flex; flex: none; justify-content: center; width: 11px; }
.car::after, .combo::after { content: ""; border: 3px solid transparent; border-top-color: #000; border-bottom: 0; }
.car.gray::after { border-top-color: #b0aca4; }
.combo { display: flex; flex: none; position: relative; align-items: center; height: 18px; margin-right: 2px; background: #fff; }
.combo::after { position: absolute; right: 3px; }
.combo select { appearance: none; width: 100%; height: 18px; padding-left: 3px; line-height: 18px; }
.combo.zoom { width: 67px; margin: 0 1px; }
.combo.zoom select, .combo.size select { font-family: "DejaVu Sans Mono", monospace; font-size: 10px; }
.combo.font { width: 151px; }
.combo.size { width: 46px; margin-right: 0; }
.more { flex: none; width: 12px; height: 25px; margin-left: 2px; border-radius: 0 3px 3px 0; background: linear-gradient(#a8a8a4, #6c6c68); display: flex; align-items: flex-end; justify-content: center; padding-bottom: 4px; }
.more::after { content: ""; border: 3px solid transparent; border-top-color: #000; border-bottom: 0; }
.more.last { margin-left: auto; }
.x-menu { display: flex; align-items: center; flex: none; height: 23px; background: linear-gradient(90deg, #d8d5ce, #f4f3f1); }
.x-menu .grip { margin-right: 3px; }
.x-menu button { width: 58px; text-align: left; white-space: nowrap; }
.x-menu .i16 { margin-right: 9px; }
.combo.ask { width: 177px; margin: 0 4px 0 auto; color: #808080; }
.mdi-btns { width: 50px; height: 12px; }
.fbar { display: flex; align-items: center; flex: none; height: 20px; padding-left: 2px; }
.name { width: 106px; height: 19px; background: #fff; text-align: center; font-family: "Liberation Mono", monospace; font-size: 13px; }
.fbar .car { width: 18px; }
.fbar em { flex: none; width: 62px; padding-right: 4px; text-align: right; font: italic bold 13px/18px "Liberation Serif", serif; }
.fbar p { flex: 1; height: 20px; padding-left: 11px; background: #fff; font-size: 16px; line-height: 20px; }
.sheet { display: flex; flex: 1; min-height: 0; border-top: 2px solid #606060; border-left: 1px solid #808080; background: #fff; }
.sheet-clip { flex: 1; min-width: 0; overflow: hidden; }
.sheet table { width: 100%; border-spacing: 0; table-layout: fixed; }
.c0 { width: 35px; }
.ca { width: 149px; }
.cb { width: 549px; }
.cn { width: 72px; }
.sheet th { height: 19px; padding: 2px 0 0; border: solid #808080; border-width: 0 1px 1px 0; background: var(--face); font: 13px/16px "Liberation Mono", monospace; }
.sheet td { height: 19px; padding: 0 0 0 2px; border-bottom: 1px solid #000; border-right: 1px solid #c0c0c0; font-size: 16px; line-height: 18px; white-space: nowrap; }
.sheet td.num { padding-top: 2px; font-size: 13px; line-height: 16px; }
.sheet td:nth-child(2), .sheet td:nth-child(3) { border-right: 2px solid #000; }
.sheet .thin td:nth-child(2) { border-right-width: 1px; }
.sheet tr:first-child td:nth-child(n+4) { border-bottom-color: #c0c0c0; }
.flag td:nth-child(2) { background: linear-gradient(135deg, #107010 3px, transparent 3px); }
.cu { display: grid; grid-template-columns: 56px 56px 72px auto; }

/* classic scroll bars */
.sb { display: flex; background: var(--face); }
.sb.v { flex-direction: column; flex: none; width: 16px; }
.sb button, .sb .bar { display: flex; flex: none; align-items: center; justify-content: center; width: 16px; height: 16px; border: 1px solid; border-color: #fff #404040 #404040 #fff; background: var(--face); box-shadow: inset -1px -1px #808080; }
.sb button::after { content: ""; border: 4px solid transparent; }
.sb .up::after { border-top: 0; border-bottom-color: #000; }
.sb .down::after { border-bottom: 0; border-top-color: #000; }
.sb .lf::after { border-left: 0; border-right-color: #000; }
.sb .rt::after { border-right: 0; border-left-color: #000; }
.sb .track { flex: 1; background: repeating-conic-gradient(#fff 0 25%, var(--face) 0 50%) 0 0 / 2px 2px; }
.sb .b102 { height: 102px; }
.sb .b173 { height: 173px; }
.sb .t44 { flex: none; height: 44px; }
.sb .fill { flex: 1; height: auto; }
.split { height: 6px; border-bottom: 2px solid #404040; border-top: 1px solid #fff; }

.tabs-row { display: flex; flex: none; height: 17px; border-top: 1px solid #808080; border-bottom: 1px solid #fff; }
.navs { width: 62px; height: 15px; border-right: 1px solid #808080; }
.stab { position: relative; width: 58px; height: 16px; }
.stab svg { position: absolute; inset: 0; width: 58px; height: 16px; }
.stab span { position: relative; display: block; font-size: 13px; line-height: 15px; text-align: center; text-decoration: underline; }
.x-status { flex: none; height: 18px; padding-left: 11px; line-height: 18px; }

/* process manager */
.erp { inset: 121px -8px 158px 715px; padding: 3px; }
.e-menu { display: flex; align-items: center; flex: none; height: 20px; padding-left: 5px; }
.e-menu button { flex: none; width: 60px; height: 18px; text-align: left; white-space: nowrap; }
.e-menu .ck { display: flex; align-items: center; gap: 4px; width: 83px; margin-left: -4px; padding-left: 0; }
.e-menu .ck + button { margin-left: 4px; }
.ck svg { width: 16px; height: 14px; }
.e-menu button:disabled { color: #8c8984; text-shadow: 1px 1px #fff; }
.groove { flex: none; height: 8px; border-top: 1px solid #808080; border-bottom: 1px solid #808080; background: linear-gradient(#fff 1px, #808080 1px, #808080 4px, var(--face) 4px); }
.e-tools { display: flex; flex: none; height: 21px; padding-left: 1px; overflow: hidden; }
.e-tools button { display: flex; flex: none; align-items: center; justify-content: center; border: 1px solid; border-color: #fff #404040 #808080 #fff; white-space: nowrap; }
.e-tools svg:not(.i18) { width: 15px; height: 15px; }
.e-tools .builder { width: 68px; color: #1414d8; font: 12px/16px "Liberation Mono", monospace; }
.w32 { width: 32px; }
.w44 { width: 44px; }
.w60 { width: 60px; }
.w62 { width: 62px; }
.w64 { width: 64px; }
.rest { width: 28px; }
.e-tools .spc { color: #e01010; }
.mdi { flex: 1; min-height: 0; overflow: hidden; padding: 2px 0 0 3px; border-top: 2px solid #505050; border-left: 1px solid #505050; }
.child { display: flex; flex-direction: column; height: 520px; padding: 2px 0 0 2px; border-top: 1px solid #fff; border-left: 1px solid #fff; }
.cols { display: flex; flex: 1; min-height: 0; }
.left { flex: none; width: 258px; padding: 2px 1px 0; }
.cap { height: 23px; margin-right: 2px; padding: 0 26px 0 0; border: 2px solid; border-color: #fff #808080 #808080 #fff; outline: 1px solid #a0a09c; outline-offset: -1px; line-height: 20px; text-align: center; }
.form { display: grid; grid-template-columns: 43px 85px 37px 86px; grid-auto-rows: 20px; row-gap: 4px; margin-right: 1px; padding: 8px 0 5px; border: 1px solid; border-color: #fff #fff #fff #a0a09c; }
.form label { line-height: 20px; text-align: center; padding-right: 6px; }
.form label:nth-of-type(even) { padding-right: 0; }
.form input { width: 100%; min-width: 0; height: 20px; padding: 0 1px; border: 1px solid; border-color: #606060 #fff #fff #606060; line-height: 18px; box-shadow: inset 1px 1px #a0a09c; }
.tabs { display: flex; align-items: flex-end; height: 20px; margin-top: 3px; padding-left: 1px; }
.tabs button { width: 46px; height: 18px; border: 1px solid; border-color: #fff #fff transparent #fff; border-radius: 2px 2px 0 0; text-align: center; padding-right: 10px; }
.tabs .cur { width: 51px; height: 20px; border-right: 2px solid #505050; }
.page { padding: 2px 1px 0 3px; border-top: 1px solid #fff; border-right: 1px solid #808080; }
.grid { display: grid; grid-template-columns: 1fr 16px; border: 1px solid; border-color: #606060 #fff #fff #404040; }
.grid .clip { min-width: 0; min-height: 0; overflow: hidden; }
.g1 { grid-template-rows: 1fr 16px; height: 231px; }
.g2 { height: 140px; margin: 8px 3px 0 4px; }
.g3 { height: 435px; border-top-width: 2px; border-left-width: 2px; }
.grid table { border-spacing: 0; table-layout: fixed; width: 0; }
.grid th { height: 17px; padding: 0; border: 1px solid; border-color: #fff #303030 #303030 #fff; font-weight: normal; line-height: 15px; white-space: nowrap; }
.grid td { height: 17px; padding: 0 0 0 1px; border: solid #bab8b4; border-width: 0 1px 1px 0; line-height: 16px; white-space: nowrap; }
.t1 td { font-family: "DejaVu Sans Mono", monospace; font-size: 10px; text-align: right; padding-right: 4px; }
.t1 th:last-child { text-align: left; }
.t1 td:first-child { text-align: left; }
.t1 td:last-child { text-align: left; padding-left: 26px; }
.grid .sel td { background: #0a246a; color: #fff; border-bottom-color: #0a246a; }
.k21 { width: 21px; }
.k25 { width: 25px; }
.k32 { width: 32px; }
.k34 { width: 34px; }
.k45 { width: 45px; }
.k51 { width: 51px; }
.k58 { width: 58px; }
.k59 { width: 59px; }
.k61 { width: 61px; }
.k79 { width: 79px; }
.k81 { width: 81px; }
.right { flex: 1; min-width: 0; padding: 5px 0 0 4px; border-left: 2px solid #fff; outline: 1px solid #a0a09c; outline-offset: -1px; }
.memos { display: flex; gap: 5px; margin-top: 6px; border-top: 1px solid #fff; }
.memo { flex: 1; height: 40px; border: 2px solid #404040; border-right-color: #606060; background: #fff; }
.m1 { display: flex; justify-content: flex-end; flex: none; width: 299px; }
.up-dis { width: 15px; height: 16px; border: 1px solid #a0a09c; background: var(--face); }
.e-status { display: flex; flex: none; gap: 2px; height: 27px; padding-top: 2px; border-top: 1px solid #fff; }
.e-status span { border: 1px solid; border-color: #808080 #fff #fff #808080; }
.s1 { width: 60px; }
.s2 { width: 58px; }
.s3 { width: 248px; }
.s4 { flex: 1; }

/* input method bar */
.ime { position: absolute; right: 0; bottom: 0; display: flex; align-items: center; justify-content: space-between; width: 149px; height: 19px; padding: 0 4px 0 1px; border: 1px solid #b0b8c0; background: #fcfcfc; }
.ime svg { width: 18px; height: 18px; }
.ime span { color: #3a7ec4; font-weight: bold; font-size: 16px; line-height: 16px; }
```
